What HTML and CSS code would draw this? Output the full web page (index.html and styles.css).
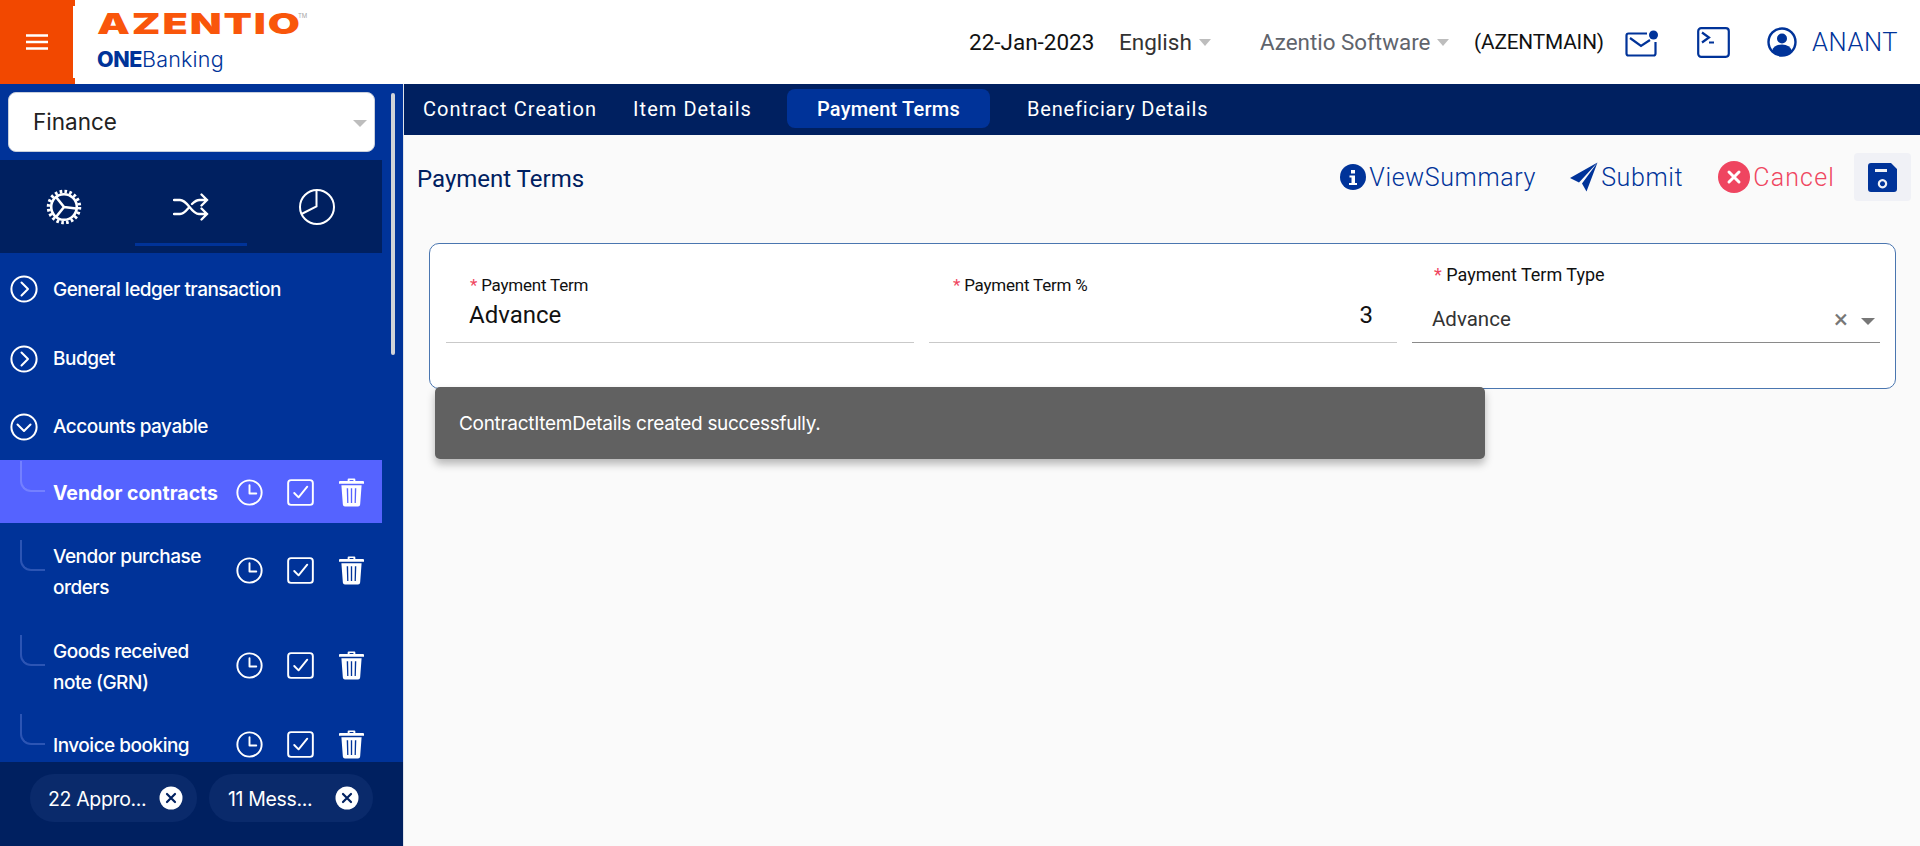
FILE: index.html
```html
<!DOCTYPE html>
<html lang="en">
<head>
<meta charset="utf-8">
<title>Payment Terms</title>
<link rel="stylesheet" href="styles.css">
</head>
<body>
<svg class="defs" width="0" height="0" aria-hidden="true">
  <defs>
    <symbol id="i-clock" viewBox="0 0 28 28"><g fill="none" stroke="#fff" stroke-width="2"><circle cx="14" cy="14" r="12.6"/><path d="M14 6.5V15h7" stroke-linecap="round" stroke-linejoin="round"/></g></symbol>
    <symbol id="i-check" viewBox="0 0 28 28"><g fill="none" stroke="#fff" stroke-width="2"><rect x="1.2" y="1.2" width="25.6" height="25.6" rx="3"/><path d="M7.5 14.5l4.500 4.500 9-11" stroke-linecap="round" stroke-linejoin="round"/></g></symbol>
    <symbol id="i-trash" viewBox="0 0 26 30"><path fill="#fff" fill-rule="evenodd" d="M9 3V1.500Q9 .5 10 .5h6q1 0 1 1V3h8q1 0 1 1v2H0V4q0-1 1-1zM11 2v1h4V2zM2.500 7.500h21L22 27.500q-.2 2-2.200 2H6.200q-2 0-2.200-2zM8 10.500l.5 15.500h1.300L9.500 10.500zM12.300 10.500V26h1.400V10.500zM16.500 10.500L16.200 26h1.300l.5-15.500z"/></symbol>
    <symbol id="i-right" viewBox="0 0 28 28"><g fill="none" stroke="#fff" stroke-width="2"><circle cx="14" cy="14" r="12.600"/><path d="M11.500 7.500L18 14l-6.500 6.500" stroke-linecap="round" stroke-linejoin="round"/></g></symbol>
    <symbol id="i-down" viewBox="0 0 28 28"><g fill="none" stroke="#fff" stroke-width="2"><circle cx="14" cy="14" r="12.600"/><path d="M7.500 11.500L14 18l6.500-6.500" stroke-linecap="round" stroke-linejoin="round"/></g></symbol>
    <symbol id="i-close" viewBox="0 0 24 24"><circle cx="12" cy="12" r="11.500" fill="#fff"/><path d="M8 8l8 8M16 8l-8 8" stroke="#002060" stroke-width="2.200" stroke-linecap="round"/></symbol>
  </defs>
</svg>

<header class="topbar">
  <button class="burger" type="button" aria-label="Menu">
    <svg width="22" height="16" viewBox="0 0 22 16"><path d="M0 1.500h22M0 8h22M0 14.500h22" stroke="#fff" stroke-width="2.400"/></svg>
  </button>
  <div class="logo">
    <div class="logo-top"><span class="logo-word">AZENTIO</span><span class="tm">TM</span></div>
    <div class="logo-bottom"><b>ONE</b>Banking</div>
  </div>
  <div class="top-right">
    <span class="date">22-Jan-2023</span>
    <span class="drop lang">English<i class="caret"></i></span>
    <span class="drop company">Azentio Software<i class="caret"></i></span>
    <span class="entity">(AZENTMAIN)</span>
    <svg class="ic-mail" width="34" height="28" viewBox="0 0 34 28"><path d="M22 3.500H3.500Q1.500 3.500 1.500 5.500v18q0 2 2 2h25q2 0 2-2V12" fill="none" stroke="#003399" stroke-width="2.200"/><path d="M5 8l11 8 9-6" fill="none" stroke="#003399" stroke-width="2.200"/><circle cx="28.500" cy="5" r="4.500" fill="#003399"/></svg>
    <svg class="ic-term" width="33" height="31" viewBox="0 0 33 31"><rect x="1.200" y="1.200" width="30.600" height="28.600" rx="3" fill="none" stroke="#003399" stroke-width="2.200"/><path d="M5 5.500l7 5-7 5M12 15.500h5" fill="none" stroke="#003399" stroke-width="2.200"/></svg>
    <svg class="ic-user" width="30" height="30" viewBox="0 0 30 30"><circle cx="15" cy="15" r="13.500" fill="none" stroke="#003399" stroke-width="2.400"/><circle cx="15" cy="11.500" r="5" fill="#003399"/><path d="M5 24q2-6.500 10-6.500T25 24q-4 5-10 5T5 24z" fill="#003399"/></svg>
    <span class="user">ANANT</span>
  </div>
</header>

<div class="shell">
  <aside class="sidebar">
    <div class="side-scroll">
      <div class="side-column">
        <div class="module">Finance<i class="caret"></i></div>
        <div class="icon-tabs">
          <div class="icon-tab">
            <svg width="36" height="36" viewBox="0 0 36 36"><g fill="none" stroke="#fff"><circle cx="18" cy="18" r="15.500" stroke-width="3.500" stroke-dasharray="2.600 2.270"/><circle cx="18" cy="18" r="12.800" stroke-width="2.600"/><path d="M18 18L30 19.500M18 18L10 8M18 18L10 28" stroke-width="2.600"/></g></svg>
          </div>
          <div class="icon-tab active">
            <svg width="36" height="28" viewBox="0 0 36 28"><path d="M1 7h6c8 0 11 14 19 14h8M1 21h6c3.500 0 6-3 8.500-6M19 11c2.500-2.500 4.500-4 7.500-4H34M28.500 1.500L34 7l-5.500 5.500M28.500 15.500L34 21l-5.500 5.500" fill="none" stroke="#fff" stroke-width="2.300" stroke-linecap="round"/></svg>
          </div>
          <div class="icon-tab">
            <svg width="38" height="38" viewBox="0 0 38 38"><g fill="none" stroke="#fff" stroke-width="2"><circle cx="19" cy="19" r="17"/><path d="M18.500 2v16.500L3.500 26"/></g></svg>
          </div>
        </div>
        <nav class="menu">
          <div class="group"><svg class="chev"><use href="#i-right"/></svg><span>General ledger transaction</span></div>
          <div class="group"><svg class="chev"><use href="#i-right"/></svg><span>Budget</span></div>
          <div class="group"><svg class="chev"><use href="#i-down"/></svg><span>Accounts payable</span></div>
          <div class="item current">
            <i class="elbow"></i><span class="item-name">Vendor contracts</span>
            <svg class="a"><use href="#i-clock"/></svg><svg class="a"><use href="#i-check"/></svg><svg class="t"><use href="#i-trash"/></svg>
          </div>
          <div class="item tall">
            <i class="elbow"></i><span class="item-name">Vendor purchase orders</span>
            <svg class="a"><use href="#i-clock"/></svg><svg class="a"><use href="#i-check"/></svg><svg class="t"><use href="#i-trash"/></svg>
          </div>
          <div class="item tall">
            <i class="elbow"></i><span class="item-name">Goods received note (GRN)</span>
            <svg class="a"><use href="#i-clock"/></svg><svg class="a"><use href="#i-check"/></svg><svg class="t"><use href="#i-trash"/></svg>
          </div>
          <div class="item">
            <i class="elbow"></i><span class="item-name">Invoice booking</span>
            <svg class="a"><use href="#i-clock"/></svg><svg class="a"><use href="#i-check"/></svg><svg class="t"><use href="#i-trash"/></svg>
          </div>
        </nav>
      </div>
      <div class="scroll-track"><div class="scroll-thumb"></div></div>
    </div>
    <div class="side-foot">
      <div class="pill pill-a"><span>22 Appro...</span><svg><use href="#i-close"/></svg></div>
      <div class="pill pill-b"><span>11 Mess...</span><svg><use href="#i-close"/></svg></div>
    </div>
  </aside>

  <main class="main">
    <nav class="tabs">
      <a class="tab">Contract Creation</a>
      <a class="tab">Item Details</a>
      <a class="tab selected">Payment Terms</a>
      <a class="tab">Beneficiary Details</a>
    </nav>
    <div class="page">
      <div class="page-head">
        <h1>Payment Terms</h1>
        <div class="actions">
          <span class="act view">
            <svg width="26" height="26" viewBox="0 0 26 26"><circle cx="13" cy="13" r="13" fill="#003399"/><path d="M11 6h4v3.500h-4zM9.500 11.500H15V19h2v2H9v-2h2.500v-5.500h-2z" fill="#fff"/></svg>ViewSummary
          </span>
          <span class="act submit">
            <svg width="28" height="30" viewBox="0 0 28 30"><path d="M27.500.5L0 16l9 4.500L27.500.5 12 21.500 16.500 29.500z" fill="#003399"/></svg>Submit
          </span>
          <span class="act cancel">
            <svg width="32" height="32" viewBox="0 0 32 32"><circle cx="16" cy="16" r="16" fill="#ef4560"/><path d="M11 11l10 10M21 11L11 21" stroke="#fff" stroke-width="3" stroke-linecap="round"/></svg>Cancel
          </span>
          <span class="save">
            <svg width="29" height="29" viewBox="0 0 29 29"><path fill="#003399" fill-rule="evenodd" d="M3 0h20l6 6v20q0 3-3 3H3q-3 0-3-3V3q0-3 3-3zM7 6v3h12V6zM14.500 16a4.700 4.700 0 1 0 .01 0zm0 2.200a2.500 2.500 0 1 1-.01 0z"/></svg>
          </span>
        </div>
      </div>
      <section class="card">
        <div class="field">
          <label class="flabel"><em>*</em> Payment Term</label>
          <div class="fvalue">Advance</div>
        </div>
        <div class="field">
          <label class="flabel"><em>*</em> Payment Term %</label>
          <div class="fvalue num">3</div>
        </div>
        <div class="field sel">
          <label class="flabel"><em>*</em> Payment Term Type</label>
          <div class="fvalue">Advance<span class="clear">×</span><i class="caret dark"></i></div>
        </div>
      </section>
      <div class="toast">ContractItemDetails created successfully.</div>
    </div>
  </main>
</div>
</body>
</html>
```

FILE: styles.css
```css
* { box-sizing: border-box; }
html, body { margin: 0; height: 846px; overflow: hidden; }
body { font-family: Roboto, "Liberation Sans", sans-serif; background: #fff; color: #000; }
.defs { position: absolute; }
.caret { display: inline-block; width: 0; height: 0; border-left: 7px solid transparent; border-right: 7px solid transparent; border-top: 7px solid #bdbdbd; }

/* top bar */
.topbar { height: 84px; display: flex; align-items: stretch; background: #fff; }
.burger { position: relative; width: 75px; border: 0; padding: 0 2px 0 0; background: #f24800; display: flex; align-items: center; justify-content: center; }
.burger::after { content: ""; position: absolute; right: 0; top: 6px; bottom: 6px; width: 2px; background: #fff; }
.logo { width: 300px; padding: 9px 0 0 22px; font-family: Inter, sans-serif; }
.logo-top { display: flex; align-items: flex-start; height: 30px; white-space: nowrap; }
.logo-word { display: inline-block; width: 201px; font-size: 29px; font-weight: 900; line-height: 30px; letter-spacing: 1.3px; color: #f9560b; transform: scaleX(1.43); transform-origin: left center; }
.tm { font-size: 6px; line-height: 8px; margin-top: 3px; color: #a8a8a8; }
.logo-bottom { font-size: 21.500px; line-height: 30px; margin-top: 5px; color: #003399; font-weight: 300; letter-spacing: .2px; white-space: nowrap; }
.logo-bottom b { font-weight: 800; letter-spacing: -.4px; }
.top-right { flex: 1; display: flex; align-items: center; padding-left: 594px; white-space: nowrap; }
.date { width: 150px; font-size: 22.500px; color: #111; }
.drop { display: flex; align-items: center; gap: 7px; font-size: 22.500px; }
.drop .caret { border-left-width: 6.500px; border-right-width: 6.500px; }
.lang { width: 141px; color: #333; }
.company { width: 214px; color: #60646c; font-size: 22.400px; }
.entity { width: 151px; font-size: 20.800px; letter-spacing: -.15px; color: #111; }
.ic-mail { margin-top: 4px; }
.ic-term { margin-left: 38px; }
.ic-user { margin-left: 37px; }
.user { margin-left: 15px; font-size: 25.500px; font-weight: 300; letter-spacing: .6px; color: #003399; }

/* shell */
.shell { height: 762px; display: flex; }
.sidebar { width: 404px; flex: none; background: #003399; display: flex; flex-direction: column; border-right: 1px solid #dfe3ea; }
.side-scroll { height: 678px; display: flex; overflow: hidden; }
.side-column { width: 382px; flex: none; padding-top: 8px; overflow: hidden; }
.scroll-track { margin: 9px 0 0 9px; width: 4px; }
.scroll-thumb { height: 262px; border-radius: 2px; background: #d0d3d8; }
.module { margin: 0 7px 0 8px; height: 60px; padding: 0 7px 2px 24px; display: flex; align-items: center; justify-content: space-between; background: #fff; border-radius: 8px; border: 1px solid #c9cfdc; font-size: 22.500px; color: #222; font-family: Inter, sans-serif; }
.module .caret { margin-top: 4px; }
.icon-tabs { margin-top: 8px; height: 93px; background: #002060; display: grid; grid-template-columns: repeat(3, 1fr); }
.icon-tab { display: flex; align-items: center; justify-content: center; }
.icon-tab:first-child { justify-content: flex-start; padding-left: 46px; }
.icon-tab:last-child { justify-content: flex-end; padding-right: 46px; }
.icon-tab.active { position: relative; }
.icon-tab.active::after { content: ""; position: absolute; left: 8px; width: 112px; top: 83px; height: 3px; background: #003399; }

/* menu */
.menu { color: #fff; font-family: Inter, sans-serif; font-size: 19px; font-weight: 500; letter-spacing: -.5px; }
.group { height: 69px; display: flex; align-items: center; gap: 15px; padding-left: 10px; }
.group:first-child { height: 70px; margin-top: 1px; }
.group:nth-child(3) { height: 68px; padding-top: 1px; padding-bottom: 2px; }
.chev { width: 28px; height: 28px; flex: none; }
.item { position: relative; display: flex; align-items: center; min-height: 63px; padding: 0 17px 0 53px; }
.item.current { background: #5563ff; font-weight: 700; margin-top: -1px; padding-top: 2px; font-size: 19.500px; letter-spacing: 0; }
.item.tall { height: 95px; line-height: 31px; }
.item-name { width: 175px; flex: none; margin-right: 8px; padding-top: 2px; }
.item.current .item-name { white-space: nowrap; padding-top: 0; }
.item .a { width: 27px; height: 27px; flex: none; margin-right: 24px; }
.item .a + .a { margin-right: 25px; }
.item .t { width: 25px; height: 29px; flex: none; }
.elbow { position: absolute; left: 20px; bottom: 50%; width: 25px; height: 31px; border-left: 2px solid #2c55b4; border-bottom: 2px solid #2c55b4; border-bottom-left-radius: 11px; }
.item.current .elbow { border-color: #7480ff; }

/* sidebar footer */
.side-foot { height: 84px; background: #002060; display: flex; gap: 12px; padding: 12px 0 0 30px; font-family: Inter, sans-serif; color: #fff; font-size: 19.500px; letter-spacing: -.35px; }
.pill { height: 48px; border-radius: 24px; background: #0a2a6b; display: flex; align-items: center; justify-content: space-between; padding: 2px 14px 0 18px; }
.pill svg { width: 24px; height: 24px; flex: none; margin-top: -2px; }
.pill-a { width: 167px; }
.pill-b { width: 164px; padding-left: 19px; }

/* main */
.main { flex: 1; min-width: 0; background: #fafafa; }
.tabs { height: 51px; background: #002060; display: flex; align-items: flex-start; color: #fff; font-size: 20px; letter-spacing: 1.05px; }
.tab { height: 39px; margin-top: 5px; display: flex; align-items: center; white-space: nowrap; }
.tab:nth-child(1) { margin-left: 19px; }
.tab:nth-child(2) { margin-left: 36px; }
.tab.selected { margin-left: 35px; width: 203px; justify-content: center; background: #003399; border-radius: 8px; font-weight: 500; letter-spacing: .2px; }
.tab:nth-child(4) { margin-left: 37px; letter-spacing: .85px; }
.page { position: relative; padding-left: 12px; }
.page-head { height: 108px; display: flex; align-items: flex-start; justify-content: space-between; padding-top: 18px; }
h1 { margin: 12px 0 0 1px; font-size: 24px; font-weight: 400; color: #002060; }
.actions { display: flex; align-items: center; font-size: 25px; letter-spacing: .65px; padding-right: 9px; height: 48px; }
.act { display: flex; align-items: center; gap: 3px; color: #003399; font-weight: 300; }
.submit { margin-left: 34px; }
.cancel { margin-left: 35px; color: #ef4560; letter-spacing: 1.15px; }
.save { margin-left: 19px; width: 57px; height: 48px; background: #f0f1f6; border-radius: 4px; display: flex; align-items: center; justify-content: center; }
.card { margin: 0 24px 0 13px; height: 146px; background: #fff; border: 1px solid #4a76b0; border-radius: 10px; display: grid; grid-template-columns: repeat(3, 1fr); column-gap: 15px; padding: 0 15px 0 16px; }
.field { height: 99px; border-bottom: 1px solid #c9c9c9; padding: 30px 0 0 24px; }
.flabel { display: block; font-size: 17px; line-height: 22px; letter-spacing: -.2px; color: #111; white-space: nowrap; }
.flabel em { font-style: normal; color: #ef4560; }
.fvalue { font-size: 24px; line-height: 32px; margin: 3px 0 0 -1px; color: #111; }
.fvalue.num { text-align: right; padding-right: 24px; }
.field.sel { border-bottom-color: #8a8a8a; padding: 20px 0 0 20px; }
.field.sel .flabel { padding-left: 2px; font-size: 18px; letter-spacing: 0; }
.field.sel .fvalue { display: flex; align-items: center; margin: 19px 0 0; font-size: 20.500px; line-height: 28px; color: #333; }
.clear { margin-left: auto; font-size: 26px; color: #777; }
.caret.dark { border-top-color: #777; margin: 4px 5px 0 13px; }
.toast { position: absolute; left: 31px; top: 252px; width: 1050px; height: 72px; background: #616161; border-radius: 5px; box-shadow: 0 5px 9px rgba(0,0,0,.28); color: #fff; font-family: Inter, sans-serif; font-size: 19px; letter-spacing: -.3px; display: flex; align-items: center; padding-left: 24px; }
```
